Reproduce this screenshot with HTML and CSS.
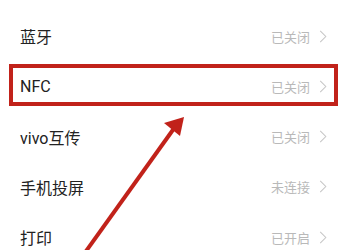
FILE: index.html
```html
<!DOCTYPE html>
<html lang="zh-CN">
<head>
  <meta charset="UTF-8">
  <title>连接与共享</title>
  <link rel="stylesheet" href="styles.css">
</head>
<body>

<div class="settings-list">
  <div class="row">
    <span class="label">蓝牙</span>
    <span class="status">已关闭</span>
    <svg class="chevron" viewBox="0 0 8 14"><path d="M1 1 L7 7 L1 13"/></svg>
  </div>
  <div class="row">
    <span class="label">NFC</span>
    <span class="status">已关闭</span>
    <svg class="chevron" viewBox="0 0 8 14"><path d="M1 1 L7 7 L1 13"/></svg>
  </div>
  <div class="row">
    <span class="label">vivo互传</span>
    <span class="status">已关闭</span>
    <svg class="chevron" viewBox="0 0 8 14"><path d="M1 1 L7 7 L1 13"/></svg>
  </div>
  <div class="row">
    <span class="label">手机投屏</span>
    <span class="status">未连接</span>
    <svg class="chevron" viewBox="0 0 8 14"><path d="M1 1 L7 7 L1 13"/></svg>
  </div>
  <div class="row">
    <span class="label">打印</span>
    <span class="status">已开启</span>
    <svg class="chevron" viewBox="0 0 8 14"><path d="M1 1 L7 7 L1 13"/></svg>
  </div>
</div>

<!-- annotation -->
<div class="highlight"></div>
<svg class="arrow" viewBox="0 0 364 250" width="364" height="250">
  <line x1="84" y1="254" x2="175" y2="127" />
  <polygon points="184,117 164,123 180,136" />
</svg>

</body>
</html>
```

FILE: styles.css
```css
* {
  margin: 0; padding: 0; box-sizing: border-box;
}
html, body {
  width: 364px;
  height: 250px;
  overflow: hidden;
}
body {
  font-family: Roboto, "Noto Sans CJK SC", sans-serif;
  background: #fff;
  position: relative;
}

.settings-list {
  padding-top: 11px;
}

.row {
  height: 50.25px;
  display: flex;
  align-items: center;
  padding: 0 37px 0 20px;
}

.row .label {
  flex: 1;
  font-size: 16px;
  color: #222;
}

.row .status {
  font-size: 13px;
  color: #b9b9b9;
  margin-right: 9px;
}

.chevron {
  width: 8px;
  height: 13px;
  fill: none;
  stroke: #c6c6c6;
  stroke-width: 1.1;
}

/* red box over the NFC row */
.highlight {
  position: absolute;
  left: 9px;
  top: 64px;
  width: 329px;
  height: 42px;
  border: 4px solid #c1221a;
}

.arrow {
  position: absolute;
  left: 0;
  top: 0;
}
.arrow line {
  stroke: #c1221a;
  stroke-width: 4;
}
.arrow polygon {
  fill: #c1221a;
}
```
